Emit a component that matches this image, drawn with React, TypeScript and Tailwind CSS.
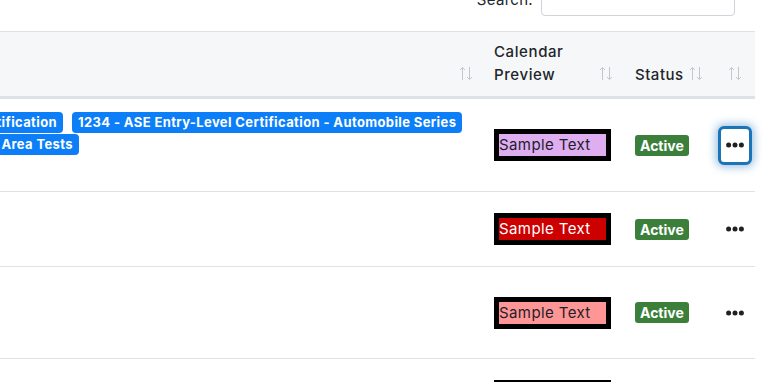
import React from "react"

const font = { fontFamily: "Inter, 'Open Sans', sans-serif" }

function SortIcon() {
    return (
        <svg width="14" height="15" viewBox="0 0 14 15" fill="none" stroke="#c3c7cb" strokeWidth="1">
            <path d="M3.5 1.5V14M1 4L3.5 1.5L6 4" />
            <path d="M10.5 1V13.5M8 11L10.5 13.5L13 11" />
        </svg>
    )
}

function Dots() {
    return (
        <svg width="18" height="6" viewBox="0 0 18 6" fill="#1f2125">
            <circle cx="2.6" cy="3" r="2.5" />
            <circle cx="9" cy="3" r="2.5" />
            <circle cx="15.4" cy="3" r="2.5" />
        </svg>
    )
}

function Badge({ children }: { children: React.ReactNode }) {
    return (
        <span className="shrink-0 whitespace-nowrap rounded-[4px] bg-[#0b7ef8] px-[6px] h-[21px] flex items-center text-[13px] font-bold text-white tracking-[0.38px]">
            {children}
        </span>
    )
}

function SampleBox({ bg, color }: { bg: string; color: string }) {
    return (
        <div className={`w-[117px] h-[32px] border-[5px] border-black ${bg} ${color} text-[15px] leading-[22px] tracking-[0.4px] whitespace-nowrap overflow-hidden`}>
            Sample Text
        </div>
    )
}

function Active() {
    return (
        <span className="inline-flex items-center h-[21px] px-[5px] rounded-[3px] bg-[#3b7f3b] text-white text-[14px] font-bold">
            Active
        </span>
    )
}

const rows = [
    { h: "h-[93px]", bg: "bg-[#dfaef0]", color: "text-[#1d1d2b]", badges: true, focused: true },
    { h: "h-[75px]", bg: "bg-[#cc0000]", color: "text-white", badges: false, focused: false },
    { h: "h-[92px]", bg: "bg-[#ff9696]", color: "text-[#1d1d2b]", badges: false, focused: false },
    { h: "h-[40px]", bg: "bg-[#dfaef0]", color: "text-[#1d1d2b]", badges: false, focused: false },
]

export default function App() {
    return (
        <div className="w-[768px] h-[382px] overflow-hidden bg-white text-[#212529]" style={font}>
            <div className="flex justify-end items-center gap-[8px] pr-[33px] mt-[-15px] h-[31px]">
                <label className="text-[15px] tracking-[0.3px]">Search:</label>
                <input className="w-[194px] h-[31px] border border-[#ced4da] rounded-[4px] bg-white" />
            </div>
            <div className="w-[755px] mt-[15px]">
                <div className="grid grid-cols-[482px_141px_90px_42px] h-[68px] bg-[#f6f7f9] border-t border-[#dee2e6] border-b-[3px] border-b-[#dee2e6]">
                    <div className="flex items-end justify-end pr-[9px] pb-[15px]"><SortIcon /></div>
                    <div className="flex items-end justify-between pl-[12px] pr-[10px] pb-[10px]">
                        <span className="text-[15px] font-medium leading-[23px] tracking-[0.6px]">Calendar<br />Preview</span>
                        <span className="pb-[5px]"><SortIcon /></span>
                    </div>
                    <div className="flex items-end pl-[12px] pb-[10px] gap-[5px]">
                        <span className="text-[15px] font-medium leading-[23px] tracking-[0.5px]">Status</span>
                        <span className="pb-[5px]"><SortIcon /></span>
                    </div>
                    <div className="flex items-end justify-center pb-[15px] pl-[2px]"><SortIcon /></div>
                </div>
                {rows.map((r, i) => (
                    <div key={i} className={`grid grid-cols-[482px_141px_90px_42px] ${r.h} border-b border-[#e2e2e2]`}>
                        <div className="overflow-hidden pt-[13px]">
                            {r.badges && (
                                <div className="flex flex-col gap-[1px]">
                                    <div className="flex">
                                        <div className="w-[63px] flex justify-end overflow-hidden">
                                            <Badge>0987 - ASE Entry-Level Certification</Badge>
                                        </div>
                                        <div className="ml-[9px]">
                                            <Badge>1234 - ASE Entry-Level Certification - Automobile Series</Badge>
                                        </div>
                                    </div>
                                    <div className="w-[79px] flex justify-end overflow-hidden">
                                        <Badge>{"Automobile Series\u00a0\u00a0Area Tests"}</Badge>
                                    </div>
                                </div>
                            )}
                        </div>
                        <div className={`flex pl-[12px] ${i === 3 ? "items-start pt-[21px]" : "items-center"}`}>
                            <SampleBox bg={r.bg} color={r.color} />
                        </div>
                        <div className="flex items-center pl-[12px]">
                            {i < 3 && <Active />}
                        </div>
                        <div className="flex items-center justify-center pl-[2px]">
                            {i < 3 && (r.focused ? (
                                <button className="w-[34px] h-[39px] flex items-center justify-center bg-white border-[3px] border-[#1c74b8] rounded-[6px] shadow-[0_0_8px_2px_rgba(28,116,184,0.45)]">
                                    <Dots />
                                </button>
                            ) : (
                                <Dots />
                            ))}
                        </div>
                    </div>
                ))}
            </div>
        </div>
    )
}
